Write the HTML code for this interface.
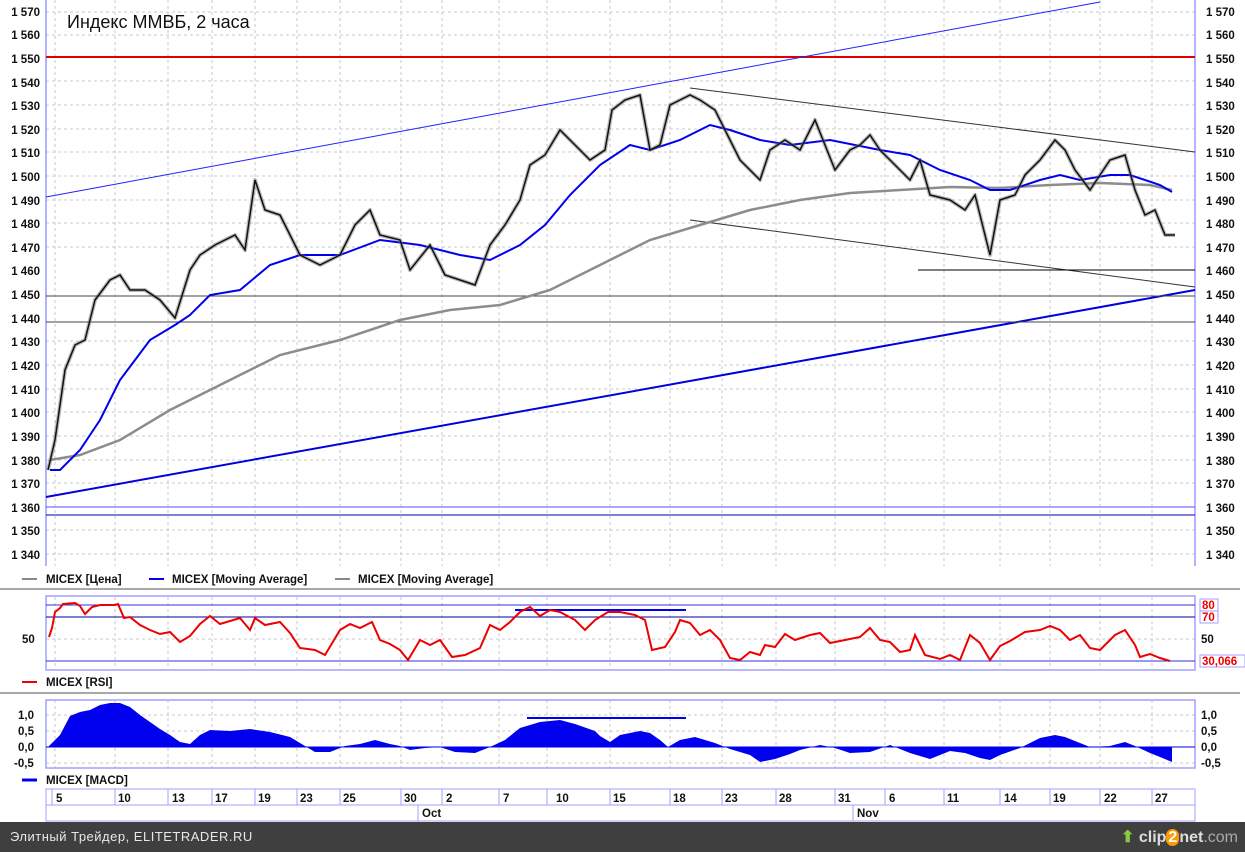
<!DOCTYPE html>
<html><head><meta charset="utf-8"><style>
html,body{margin:0;padding:0;background:#fff;}
body{width:1245px;height:852px;overflow:hidden;position:relative;font-family:"Liberation Sans",sans-serif;}
svg text{font-family:"Liberation Sans",sans-serif;}
.foot{position:absolute;left:0;top:822px;width:1245px;height:30px;background:#3f3f3f;color:#e8e8e8;font-size:13px;}
</style></head><body>
<svg width="1245" height="822" viewBox="0 0 1245 822" xmlns="http://www.w3.org/2000/svg" style="position:absolute;left:0;top:0">
<rect width="1245" height="822" fill="#fff"/>
<g stroke="#c8c8c8" stroke-dasharray="3,3" stroke-width="1" fill="none">
<path d="M55 0V566M115 0V566M168 0V566M212 0V566M255 0V566M297 0V566M340 0V566M401 0V566M442 0V566M499 0V566M547 0V566M610 0V566M670 0V566M722 0V566M776 0V566M835 0V566M885 0V566M944 0V566M1000 0V566M1050 0V566M1100 0V566M1152 0V566"/>
<path d="M46 12H1195M46 35H1195M46 81H1195M46 105H1195M46 129H1195M46 152H1195M46 176H1195M46 200H1195M46 223H1195M46 247H1195M46 341H1195M46 365H1195M46 389H1195M46 412H1195M46 436H1195M46 460H1195M46 483H1195M46 530H1195M46 554H1195"/>
<path d="M55 597V668M115 597V668M168 597V668M212 597V668M255 597V668M297 597V668M340 597V668M401 597V668M442 597V668M499 597V668M547 597V668M610 597V668M670 597V668M722 597V668M776 597V668M835 597V668M885 597V668M944 597V668M1000 597V668M1050 597V668M1100 597V668M1152 597V668M46 639H1195"/>
<path d="M55 700V768M115 700V768M168 700V768M212 700V768M255 700V768M297 700V768M340 700V768M401 700V768M442 700V768M499 700V768M547 700V768M610 700V768M670 700V768M722 700V768M776 700V768M835 700V768M885 700V768M944 700V768M1000 700V768M1050 700V768M1100 700V768M1152 700V768M46 715H1195M46 731H1195M46 763H1195"/>
</g>
<path d="M46 0V566M1195 0V566" stroke="#9a9aff" stroke-width="1.5"/>
<g font-size="11.5" font-weight="bold" fill="#111">
<g text-anchor="end">
<text x="40" y="16">1 570</text><text x="40" y="39">1 560</text><text x="40" y="63">1 550</text><text x="40" y="87">1 540</text><text x="40" y="110">1 530</text><text x="40" y="134">1 520</text><text x="40" y="157">1 510</text><text x="40" y="181">1 500</text><text x="40" y="205">1 490</text><text x="40" y="228">1 480</text><text x="40" y="252">1 470</text><text x="40" y="275">1 460</text><text x="40" y="299">1 450</text><text x="40" y="323">1 440</text><text x="40" y="346">1 430</text><text x="40" y="370">1 420</text><text x="40" y="394">1 410</text><text x="40" y="417">1 400</text><text x="40" y="441">1 390</text><text x="40" y="465">1 380</text><text x="40" y="488">1 370</text><text x="40" y="512">1 360</text><text x="40" y="535">1 350</text><text x="40" y="559">1 340</text>
</g>
<g>
<text x="1206" y="16">1 570</text><text x="1206" y="39">1 560</text><text x="1206" y="63">1 550</text><text x="1206" y="87">1 540</text><text x="1206" y="110">1 530</text><text x="1206" y="134">1 520</text><text x="1206" y="157">1 510</text><text x="1206" y="181">1 500</text><text x="1206" y="205">1 490</text><text x="1206" y="228">1 480</text><text x="1206" y="252">1 470</text><text x="1206" y="275">1 460</text><text x="1206" y="299">1 450</text><text x="1206" y="323">1 440</text><text x="1206" y="346">1 430</text><text x="1206" y="370">1 420</text><text x="1206" y="394">1 410</text><text x="1206" y="417">1 400</text><text x="1206" y="441">1 390</text><text x="1206" y="465">1 380</text><text x="1206" y="488">1 370</text><text x="1206" y="512">1 360</text><text x="1206" y="535">1 350</text><text x="1206" y="559">1 340</text>
</g>
</g>
<text x="67" y="28" font-size="18" fill="#111">Индекс ММВБ, 2 часа</text>
<line x1="46" y1="57" x2="1195" y2="57" stroke="#e00000" stroke-width="2"/>
<line x1="46" y1="197" x2="1100" y2="2" stroke="#2020ff" stroke-width="1"/>
<line x1="46" y1="497" x2="1195" y2="290" stroke="#0000e0" stroke-width="2"/>
<line x1="690" y1="88" x2="1195" y2="152" stroke="#333" stroke-width="1"/>
<line x1="690" y1="220" x2="1195" y2="287" stroke="#333" stroke-width="1"/>
<line x1="918" y1="270" x2="1195" y2="270" stroke="#000" stroke-width="1"/>
<line x1="46" y1="296" x2="1195" y2="296" stroke="#444" stroke-width="1"/>
<line x1="46" y1="322" x2="1195" y2="322" stroke="#444" stroke-width="1"/>
<line x1="46" y1="507" x2="1195" y2="507" stroke="#5050ff" stroke-width="1"/>
<line x1="46" y1="515" x2="1195" y2="515" stroke="#0000b0" stroke-width="1"/>
<polyline fill="none" stroke="#8c8c8c" stroke-width="2.5" points="50,460 80,455 120,440 170,410 200,395 240,375 280,355 340,340 400,320 450,310 500,305 550,290 600,265 650,240 700,225 750,210 800,200 850,193 900,190 950,187 1000,188 1050,185 1100,183 1150,185 1172,190"/>
<polyline fill="none" stroke="#0000ee" stroke-width="2" points="50,470 60,470 80,450 100,420 120,380 150,340 175,325 190,315 210,295 240,290 270,265 300,255 340,255 380,240 420,245 460,255 490,260 520,245 545,225 570,195 600,165 630,145 650,150 680,140 710,125 730,130 760,140 790,145 830,140 880,150 910,155 940,170 970,180 990,190 1010,190 1040,180 1060,175 1080,180 1110,175 1130,175 1160,185 1172,192"/>
<polyline fill="none" stroke="#777" stroke-width="4" stroke-linejoin="round" opacity="0.5" points="48,470 55,440 65,370 75,345 85,340 95,300 110,280 120,275 130,290 145,290 160,300 175,318 190,270 200,255 215,245 235,235 245,250 255,180 265,210 280,215 290,235 300,255 320,265 340,255 355,225 370,210 380,235 400,240 410,270 430,245 445,275 460,280 475,285 490,245 505,225 520,200 530,165 545,155 560,130 575,145 590,160 605,150 612,110 625,100 640,95 650,150 660,145 670,105 680,100 690,95 700,100 715,110 725,130 740,160 760,180 770,150 785,140 800,150 815,120 825,145 835,170 850,150 860,145 870,135 880,150 895,165 910,180 920,160 930,195 950,200 965,210 975,195 990,255 1000,200 1015,195 1025,175 1040,160 1055,140 1065,150 1075,170 1090,190 1110,160 1125,155 1135,190 1145,215 1155,210 1165,235 1175,235"/>
<polyline fill="none" stroke="#111" stroke-width="1.5" points="48,470 55,440 65,370 75,345 85,340 95,300 110,280 120,275 130,290 145,290 160,300 175,318 190,270 200,255 215,245 235,235 245,250 255,180 265,210 280,215 290,235 300,255 320,265 340,255 355,225 370,210 380,235 400,240 410,270 430,245 445,275 460,280 475,285 490,245 505,225 520,200 530,165 545,155 560,130 575,145 590,160 605,150 612,110 625,100 640,95 650,150 660,145 670,105 680,100 690,95 700,100 715,110 725,130 740,160 760,180 770,150 785,140 800,150 815,120 825,145 835,170 850,150 860,145 870,135 880,150 895,165 910,180 920,160 930,195 950,200 965,210 975,195 990,255 1000,200 1015,195 1025,175 1040,160 1055,140 1065,150 1075,170 1090,190 1110,160 1125,155 1135,190 1145,215 1155,210 1165,235 1175,235"/>
<g font-size="11.5" font-weight="bold" fill="#111">
<line x1="22" y1="579" x2="37" y2="579" stroke="#111"/><text x="46" y="583">MICEX [Цена]</text>
<line x1="149" y1="579" x2="164" y2="579" stroke="#00e" stroke-width="2"/><text x="172" y="583">MICEX [Moving Average]</text>
<line x1="335" y1="579" x2="350" y2="579" stroke="#888" stroke-width="2"/><text x="358" y="583">MICEX [Moving Average]</text>
<line x1="22" y1="682" x2="37" y2="682" stroke="#e00" stroke-width="2"/><text x="46" y="686">MICEX [RSI]</text>
<line x1="22" y1="780" x2="37" y2="780" stroke="#00e" stroke-width="3"/><text x="46" y="784">MICEX [MACD]</text>
</g>
<rect x="0" y="588" width="1240" height="2" fill="#a8a8a8"/>
<rect x="0" y="692" width="1240" height="2" fill="#a8a8a8"/>
<rect x="46" y="596" width="1149" height="74" fill="none" stroke="#a0a0ff" stroke-width="1.5"/>
<line x1="46" y1="605" x2="1195" y2="605" stroke="#3030e0"/>
<line x1="46" y1="617" x2="1195" y2="617" stroke="#0000a0"/>
<line x1="46" y1="661" x2="1195" y2="661" stroke="#3030e0"/>
<line x1="515" y1="610" x2="686" y2="610" stroke="#0000ee" stroke-width="2"/>
<polyline fill="none" stroke="#ee0000" stroke-width="2" points="49,637 52,628 55,612 60,608 63,604 75,603 80,606 85,614 92,607 100,605 115,605 118,604 124,618 130,617 140,625 150,630 160,634 170,632 180,642 190,636 200,624 210,616 220,624 230,621 240,618 250,630 255,618 265,625 280,622 290,633 300,648 315,650 325,655 340,630 350,624 360,628 372,622 380,640 390,644 400,650 408,660 420,640 430,645 440,640 452,657 465,655 480,648 490,625 500,630 510,622 520,612 530,607 540,616 550,610 560,612 575,620 585,630 595,620 608,612 620,612 635,615 645,620 652,650 665,647 675,632 680,620 690,623 700,635 710,630 720,640 730,658 740,660 750,652 760,655 765,645 775,647 785,634 795,640 810,635 820,633 830,643 845,640 860,637 870,628 880,640 890,642 900,652 910,650 915,635 925,655 940,659 950,655 960,660 970,635 980,643 990,660 1000,646 1010,641 1025,632 1040,630 1050,626 1060,630 1070,640 1080,635 1090,648 1100,650 1110,640 1115,635 1125,630 1135,645 1140,657 1150,654 1160,658 1170,661"/>
<g font-size="11.5" font-weight="bold">
<text x="22" y="643" fill="#111">50</text>
<text x="1201" y="643" fill="#111">50</text>
<rect x="1200" y="599" width="18" height="12" fill="#fff" stroke="#a0a0ff"/><text x="1202" y="609" fill="#e00">80</text>
<rect x="1200" y="611" width="18" height="12" fill="#fff" stroke="#a0a0ff"/><text x="1202" y="621" fill="#e00">70</text>
<rect x="1200" y="655" width="45" height="12" fill="#fff" stroke="#a0a0ff"/><text x="1202" y="665" fill="#e00">30,066</text>
</g>
<rect x="46" y="700" width="1149" height="68" fill="none" stroke="#a0a0ff" stroke-width="1.5"/>
<polygon fill="#0000ee" points="48,747 60,735 70,716 80,712 90,710 100,705 110,703 120,703 130,707 140,715 150,722 160,729 170,735 180,742 190,744 200,735 210,730 230,731 250,729 270,732 290,737 305,746 315,752 330,752 345,746 360,744 375,740 390,744 400,746 410,750 425,748 440,747 455,752 475,753 490,747 505,740 520,728 540,722 560,720 575,724 595,731 600,736 610,742 620,735 640,731 650,733 660,740 668,747 680,740 695,737 715,743 730,749 750,755 760,762 775,759 790,754 800,750 820,745 835,748 850,753 870,752 890,745 910,753 930,759 950,751 965,753 980,758 990,760 1000,755 1020,748 1040,738 1055,735 1065,737 1080,743 1090,747 1110,746 1125,742 1135,746 1150,753 1160,757 1172,762 1172,747"/>
<line x1="46" y1="747" x2="1195" y2="747" stroke="#0000ee"/>
<line x1="527" y1="718" x2="686" y2="718" stroke="#0000ee" stroke-width="2"/>
<g font-size="11.5" font-weight="bold" fill="#111">
<text x="18" y="719">1,0</text><text x="18" y="735">0,5</text><text x="18" y="751">0,0</text><text x="14" y="767">-0,5</text>
<text x="1201" y="719">1,0</text><text x="1201" y="735">0,5</text><text x="1201" y="751">0,0</text><text x="1201" y="767">-0,5</text>
</g>
<rect x="46" y="789" width="1149" height="32" fill="none" stroke="#a0a0ff"/>
<line x1="46" y1="805" x2="1195" y2="805" stroke="#a0a0ff"/>
<path d="M52 789V805M115 789V805M168 789V805M212 789V805M255 789V805M297 789V805M340 789V805M401 789V805M442 789V805M499 789V805M547 789V805M610 789V805M670 789V805M722 789V805M776 789V805M835 789V805M885 789V805M944 789V805M1000 789V805M1050 789V805M1100 789V805M1152 789V805M418 805V821M853 805V821" stroke="#a0a0ff"/>
<g font-size="11.5" font-weight="bold" fill="#111">
<text x="56" y="802">5</text><text x="118" y="802">10</text><text x="172" y="802">13</text><text x="215" y="802">17</text><text x="258" y="802">19</text><text x="300" y="802">23</text><text x="343" y="802">25</text><text x="404" y="802">30</text><text x="446" y="802">2</text><text x="503" y="802">7</text><text x="556" y="802">10</text><text x="613" y="802">15</text><text x="673" y="802">18</text><text x="725" y="802">23</text><text x="779" y="802">28</text><text x="838" y="802">31</text><text x="889" y="802">6</text><text x="947" y="802">11</text><text x="1004" y="802">14</text><text x="1053" y="802">19</text><text x="1104" y="802">22</text><text x="1155" y="802">27</text>
<text x="422" y="817">Oct</text><text x="857" y="817">Nov</text>
</g>
</svg>
<div class="foot">
<span style="position:absolute;left:10px;top:7px;letter-spacing:0.5px">Элитный Трейдер, ELITETRADER.RU</span>
<span style="position:absolute;left:1121px;top:5px;font-size:16px;font-weight:bold;color:#ddd"><span style="color:#8c4">⬆</span> clip<span style="background:#f90;border-radius:8px;color:#fff;padding:0 2px">2</span>net<span style="color:#aaa;font-weight:normal">.com</span></span>
</div>
</body></html>
